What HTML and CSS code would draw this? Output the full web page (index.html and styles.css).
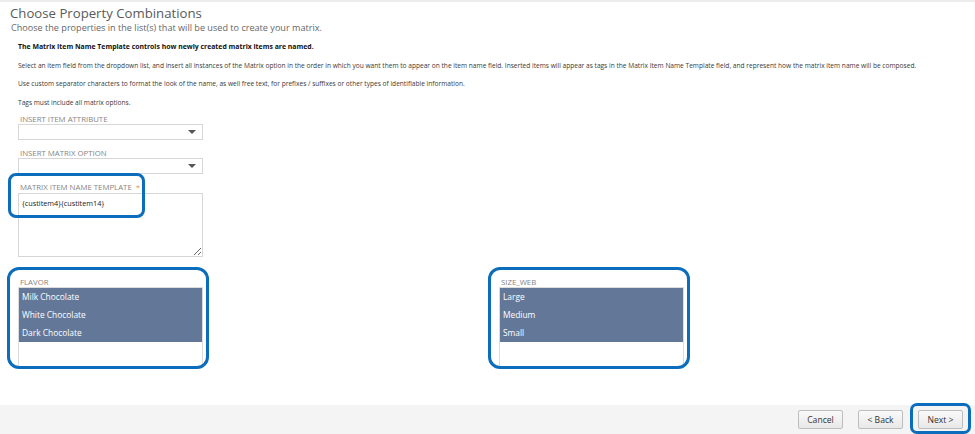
FILE: index.html
```html
<!DOCTYPE html>
<html lang="en">
<head>
  <meta charset="UTF-8" />
  <title>Choose Property Combinations</title>
  <link rel="stylesheet" href="styles.css">
</head>
<body>

  <main class="page">
    <h1 class="title">Choose Property Combinations</h1>
    <p class="subtitle">Choose the properties in the list(s) that will be used to create your matrix.</p>

    <div class="intro">
      <p class="strong">The Matrix Item Name Template controls how newly created matrix items are named.</p>
      <p>Select an item field from the dropdown list, and insert all instances of the Matrix option in the order in which you want them to appear on the item name field. Inserted items will appear as tags in the Matrix Item Name Template field, and represent how the matrix item name will be composed.</p>
      <p>Use custom separator characters to format the look of the name, as well free text, for prefixes / suffixes or other types of identifiable information.</p>
      <p>Tags must include all matrix options.</p>
    </div>

    <div class="fields">
      <div class="field">
        <label class="label">Insert Item Attribute</label>
        <div class="dropdown">
          <svg class="caret" width="8" height="4" viewBox="0 0 8 4"><path d="M0 0h8L4 4z" fill="#555"/></svg>
        </div>
      </div>

      <div class="field">
        <label class="label">Insert Matrix Option</label>
        <div class="dropdown">
          <svg class="caret" width="8" height="4" viewBox="0 0 8 4"><path d="M0 0h8L4 4z" fill="#555"/></svg>
        </div>
      </div>

      <div class="field template">
        <span class="mark mark-template"></span>
        <label class="label">Matrix Item Name Template <span class="req">*</span></label>
        <textarea class="textbox" readonly>{custitem4}{custitem14}</textarea>
      </div>
    </div>

    <div class="lists">
      <div class="field list-field">
        <span class="mark mark-list"></span>
        <label class="label">Flavor</label>
        <div class="listbox">
          <div class="option">Milk Chocolate</div>
          <div class="option">White Chocolate</div>
          <div class="option">Dark Chocolate</div>
        </div>
      </div>

      <div class="field list-field">
        <span class="mark mark-list"></span>
        <label class="label">Size_web</label>
        <div class="listbox">
          <div class="option">Large</div>
          <div class="option">Medium</div>
          <div class="option">Small</div>
        </div>
      </div>
    </div>
  </main>

  <footer class="actions">
    <button class="btn">Cancel</button>
    <button class="btn">&lt; Back</button>
    <span class="next-wrap">
      <span class="mark mark-next"></span>
      <button class="btn">Next &gt;</button>
    </span>
  </footer>

</body>
</html>
```

FILE: styles.css
```css
* {
  margin: 0; padding: 0; box-sizing: border-box;
}
html, body {
  height: 100%;
}
body {
  font-family: 'Open Sans', sans-serif;
  color: #333;
  background: #fff;
  display: flex;
  flex-direction: column;
  border-top: 2px solid #ececec;
}
.page {
  flex: 1;
  padding: 2px 0 0 10px;
}
.title {
  font-size: 13.2px;
  font-weight: 400;
  color: #5a5a5a;
  line-height: 18px;
}
.subtitle {
  font-size: 9.1px;
  color: #666;
  line-height: 12px;
  margin-left: 1px;
}
.intro {
  padding: 4px 0 0 8px;
}
.intro p {
  font-size: 6.6px;
  line-height: 18.5px;
  color: #3a3a3a;
}
.intro p.strong {
  font-size: 6.9px;
  font-weight: 700;
  color: #111;
}

/* fields */
.fields {
  padding: 2px 0 0 8px;
  display: flex;
  flex-direction: column;
  gap: 8px;
}
.field {
  position: relative;
  width: 185px;
}
.label {
  display: block;
  font-size: 7.8px;
  line-height: 10px;
  text-transform: uppercase;
  color: #858585;
  padding-left: 2px;
}
.req {
  color: #e69a3c;
  font-size: 8px;
  margin-left: 2px;
}
.dropdown {
  height: 16px;
  border: 1px solid #d6d6d6;
  background: #fff;
  display: flex;
  align-items: center;
  justify-content: flex-end;
  padding-right: 6px;
}
.caret {
  display: block;
}
.textbox {
  display: block;
  width: 185px;
  height: 64px;
  margin-top: 1px;
  border: 1px solid #d6d6d6;
  font-family: 'Open Sans', sans-serif;
  font-size: 7.3px;
  line-height: 10px;
  color: #222;
  padding: 4px 3px;
  resize: vertical;
  outline: none;
}

/* listboxes */
.lists {
  display: grid;
  grid-template-columns: 481px 1fr;
  padding: 20px 0 0 8px;
}
.listbox {
  height: 80px;
  border: 1px solid #dcdcdc;
  background: #fff;
}
.option {
  background: #637899;
  color: #fff;
  font-size: 8.4px;
  line-height: 18px;
  padding-left: 3px;
}

/* blue annotation outlines */
.mark {
  position: absolute;
  border: 3px solid #0b6dbb;
  pointer-events: none;
}
.mark-template {
  left: -10px;
  top: -9px;
  width: 137px;
  height: 45px;
  border-radius: 8px;
}
.mark-list {
  left: -11px;
  top: -10px;
  width: 202px;
  height: 102px;
  border-radius: 12px;
}
.mark-next {
  left: -8px;
  top: -7px;
  width: 61px;
  height: 31px;
  border-radius: 7px;
}

/* footer */
.actions {
  height: 29px;
  background: #f4f4f4;
  display: flex;
  align-items: center;
  justify-content: flex-end;
  gap: 15px;
  padding-right: 12px;
}
.next-wrap {
  position: relative;
  display: block;
}
.btn {
  display: block;
  height: 19px;
  padding: 0 8px;
  min-width: 45px;
  font-family: 'Open Sans', sans-serif;
  font-size: 8.6px;
  color: #333;
  background: linear-gradient(#fafafa, #e8e8e8);
  border: 1px solid #bdbdbd;
  border-radius: 2px;
}
```
